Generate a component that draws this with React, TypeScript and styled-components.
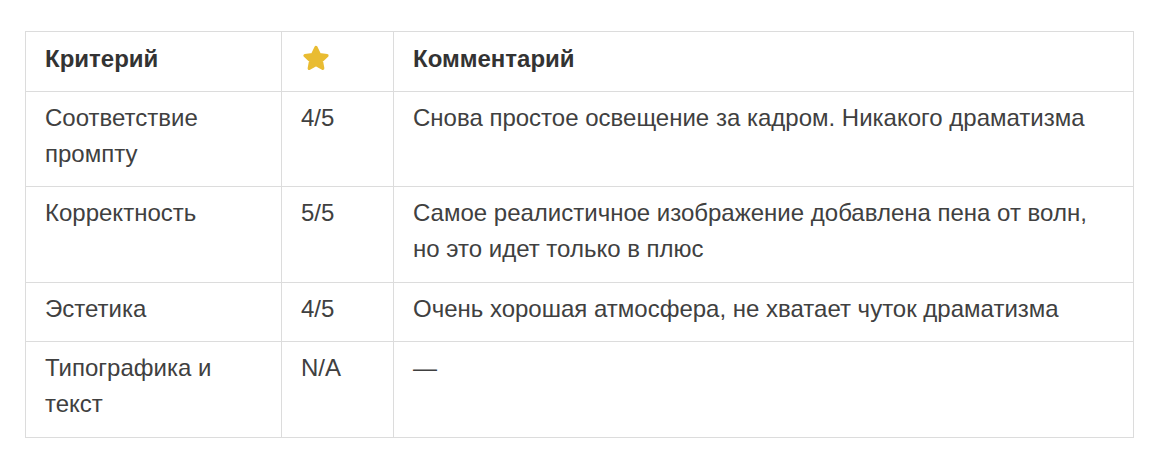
import React from 'react'
import styled, { createGlobalStyle } from 'styled-components'

const GlobalStyle = createGlobalStyle`
	body {
		margin: 0;
		background: #fff;
		font-family: 'Liberation Sans', Arial, sans-serif;
		color: #404040;
	}
`

type Row = {
	criterion: string
	score: string
	comment: string
}

const rows: Array<Row> = [
	{
		criterion: 'Соответствие промпту',
		score: '4/5',
		comment: 'Снова простое освещение за кадром. Никакого драматизма'
	},
	{
		criterion: 'Корректность',
		score: '5/5',
		comment: 'Самое реалистичное изображение добавлена пена от волн, но это идет только в плюс'
	},
	{
		criterion: 'Эстетика',
		score: '4/5',
		comment: 'Очень хорошая атмосфера, не хватает чуток драматизма'
	},
	{
		criterion: 'Типографика и текст',
		score: 'N/A',
		comment: '—'
	}
]

const Star = () => (
	<StarIcon width="30" height="30" viewBox="0 0 24 24">
		<path
			d="M12 2.8 L14.7 8.4 L20.8 9.2 L16.3 13.4 L17.4 19.5 L12 16.5 L6.6 19.5 L7.7 13.4 L3.2 9.2 L9.3 8.4 Z"
			fill="#e9bc32"
			stroke="#e9bc32"
			strokeWidth="2.6"
			strokeLinejoin="round"
		/>
	</StarIcon>
)

const App = () => {
	return (
		<>
			<GlobalStyle />
			<Page>
				<Table>
					<colgroup>
						<col style={{ width: 256 }} />
						<col style={{ width: 112 }} />
						<col />
					</colgroup>
					<thead>
						<tr>
							<Head>Критерий</Head>
							<Head>
								<Star />
							</Head>
							<Head>Комментарий</Head>
						</tr>
					</thead>
					<tbody>
						{rows.map((r) => (
							<tr key={r.criterion}>
								<Cell>{r.criterion}</Cell>
								<Cell>{r.score}</Cell>
								<Cell>{r.comment}</Cell>
							</tr>
						))}
					</tbody>
				</Table>
			</Page>
		</>
	)
}

const Page = styled.div`
	padding: 31px 24px 0 25px;
`

const Table = styled.table`
	width: 1109px;
	border-collapse: collapse;
	table-layout: fixed;
	font-size: 24px;
	line-height: 36px;
`

const Head = styled.th`
	text-align: left;
	font-weight: 700;
	color: #333;
	vertical-align: middle;
	padding: 8.5px 19px 14px;
	border: 1px solid #dcdcdc;
	height: 36px;
`

const Cell = styled.td`
	text-align: left;
	vertical-align: top;
	padding: 8px 19px 14.5px;
	border: 1px solid #dcdcdc;
`

const StarIcon = styled.svg`
	display: block;
`

export default App
